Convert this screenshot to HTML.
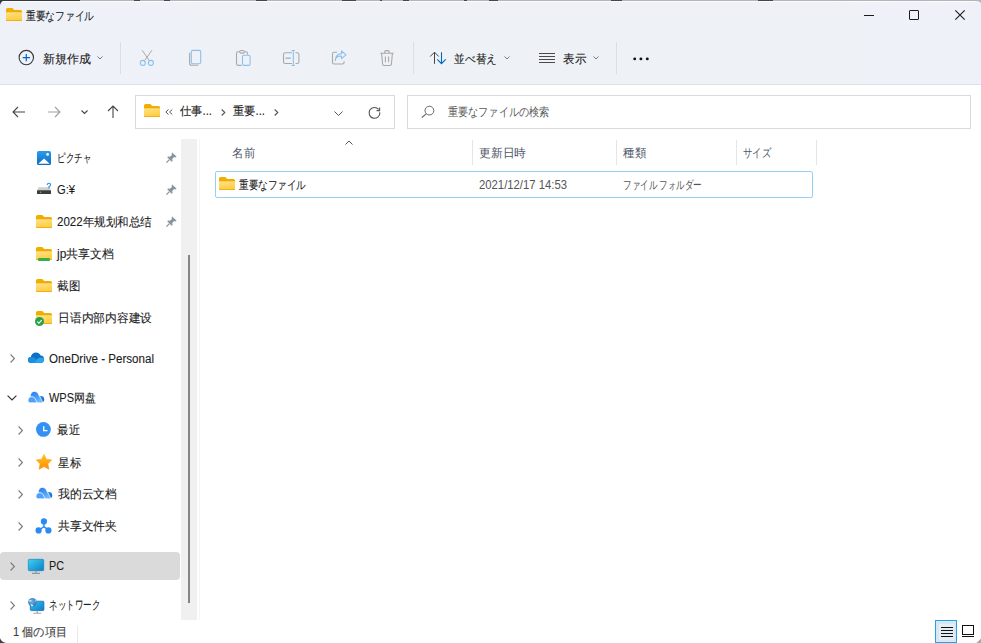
<!DOCTYPE html>
<html><head><meta charset="utf-8">
<style>
*{margin:0;padding:0;box-sizing:border-box}
html,body{width:981px;height:643px;overflow:hidden;background:#fff}
body{font-family:"Liberation Sans",sans-serif;font-size:12px;color:#1b1b1b;position:relative;-webkit-text-stroke:0.1px currentColor}
.a{position:absolute;white-space:nowrap}
svg{position:absolute;overflow:visible}
.t{line-height:14px}
.fit{transform-origin:0 50%}
.box{position:absolute;border:1px solid #dadada;background:#fff}
.sep{position:absolute;width:1px;background:#dcdfe5}
.lt{-webkit-text-stroke:0}
.colsep{position:absolute;top:140px;height:25px;width:1px;background:#e5e5e5}
</style></head><body>
<div class="a" style="left:0px;top:0px;width:981px;height:85px;background:linear-gradient(90deg,#eff1f9 0%,#eef2f7 22%,#eef2f6 60%,#eef2f7 85%,#eff1f9 100%);"></div>
<div class="a" style="left:0px;top:84px;width:981px;height:1px;background:#dde1e6;"></div>
<div class="a" style="left:0px;top:0px;width:981px;height:1px;background:#b4b4b6;"></div>
<div class="a" style="left:0px;top:0px;width:80px;height:1px;background:#373a41;"></div>
<div class="a" style="left:0px;top:1px;width:976px;height:1px;background:#fbfcfe;"></div>
<div class="a" style="left:134px;top:0px;width:6px;height:1px;background:#45474c;"></div>
<div class="a" style="left:164px;top:0px;width:6px;height:1px;background:#45474c;"></div>
<div class="a" style="left:256px;top:0px;width:11px;height:1px;background:#45474c;"></div>
<div class="a" style="left:342px;top:0px;width:14px;height:1px;background:#45474c;"></div>
<div class="a" style="left:380px;top:0px;width:2px;height:1px;background:#45474c;"></div>
<div class="a" style="left:403px;top:0px;width:6px;height:1px;background:#45474c;"></div>
<div class="a" style="left:464px;top:0px;width:3px;height:1px;background:#45474c;"></div>
<div class="a" style="left:489px;top:0px;width:9px;height:1px;background:#45474c;"></div>
<div class="a" style="left:611px;top:0px;width:11px;height:1px;background:#45474c;"></div>
<div class="a" style="left:758px;top:0px;width:15px;height:1px;background:#45474c;"></div>
<svg style="left:0px;top:0px" width="5" height="5" viewBox="0 0 5 5"><path d="M0 0H5Q1 1 0 5Z" fill="#373a41"/></svg>
<svg style="left:973px;top:0px" width="8" height="4" viewBox="0 0 8 4"><path d="M8 0H0Q6 0.5 8 3Z" fill="#b4b4b6"/></svg>
<svg style="left:6px;top:8px" width="16" height="13" viewBox="0 0 16 13"><defs><linearGradient id="fg1" x1="0" y1="0" x2="0.3" y2="1"><stop offset="0" stop-color="#ffe18a"/><stop offset="1" stop-color="#ffce45"/></linearGradient></defs><path d="M0 1.6Q0 0 1.6 0H6.4L8.2 2H14.4Q16 2 16 3.6V11.4Q16 13 14.4 13H1.6Q0 13 0 11.4Z" fill="#efae00"/><path d="M0 3.4H16V11.4Q16 13 14.4 13H1.6Q0 13 0 11.4Z" fill="#e9a800"/><path d="M0 4.2H16V11.2Q16 12.3 14.6 12.3H1.4Q0 12.3 0 11.2Z" fill="url(#fg1)"/></svg>
<div class="a t fit" style="left:26px;top:9px;--w:68;">重要なファイル</div>
<div class="a" style="left:864px;top:15px;width:10px;height:1px;background:#1b1b1b;"></div>
<div class="a" style="left:909px;top:10px;width:10px;height:10px;border:1px solid #1b1b1b;border-radius:1px"></div>
<svg style="left:955px;top:10px" width="10" height="10" viewBox="0 0 10 10"><path d="M0.3 0.3L9.7 9.7M9.7 0.3L0.3 9.7" stroke="#1b1b1b" stroke-width="1.1"/></svg>
<svg style="left:18px;top:50px" width="17" height="16" viewBox="0 0 17 16"><circle cx="8.3" cy="7.6" r="7.2" fill="none" stroke="#3a3a3a" stroke-width="1.1"/><path d="M8.3 3.9V11.3M4.6 7.6H12" stroke="#0067c0" stroke-width="1.2"/></svg>
<div class="a t fit" style="left:43px;top:52px;--w:48;">新規作成</div>
<svg style="left:97px;top:56px" width="6" height="4" viewBox="0 0 6 4"><path d="M0.5 0.5L3 3L5.5 0.5" fill="none" stroke="#7a7a7a" stroke-width="1"/></svg>
<div class="sep" style="left:120px;top:42px;height:32px"></div>
<svg style="left:139px;top:50px" width="16" height="16" viewBox="0 0 16 16"><path d="M3.2 0.3L10.3 10.6M12.9 0.3L5.6 10.6" stroke="#a9a9a9" stroke-width="1" fill="none"/><circle cx="3.8" cy="12.9" r="2.5" fill="none" stroke="#8cc0ec" stroke-width="1.1"/><circle cx="11.9" cy="12.9" r="2.5" fill="none" stroke="#8cc0ec" stroke-width="1.1"/></svg>
<svg style="left:189px;top:50px" width="13" height="16" viewBox="0 0 13 16"><rect x="2.3" y="0.4" width="9.4" height="13.4" rx="1.6" fill="none" stroke="#8cc0ec" stroke-width="1.1"/><path d="M0.6 2.8V13.3Q0.6 15.3 2.6 15.3H9.3" fill="none" stroke="#a9a9a9" stroke-width="1.1"/></svg>
<svg style="left:236px;top:50px" width="15" height="16" viewBox="0 0 15 16"><path d="M4 1.8H2.1Q0.5 1.8 0.5 3.4V13.8Q0.5 15.4 2.1 15.4H5.5M8 1.8H9.9Q11.5 1.8 11.5 3.4V4.5" fill="none" stroke="#a9a9a9" stroke-width="1.1"/><rect x="3.8" y="0.5" width="4.4" height="2.6" rx="1.2" fill="none" stroke="#a9a9a9" stroke-width="1.1"/><rect x="6.5" y="5.2" width="7.6" height="10.2" rx="1.5" fill="none" stroke="#8cc0ec" stroke-width="1.1"/></svg>
<svg style="left:283px;top:50px" width="17" height="16" viewBox="0 0 17 16"><path d="M9 2.8H2.1Q0.5 2.8 0.5 4.4V11.9Q0.5 13.5 2.1 13.5H9M12.5 2.8H14.3Q15.9 2.8 15.9 4.4V11.9Q15.9 13.5 14.3 13.5H12.5" fill="none" stroke="#a9a9a9" stroke-width="1.1"/><path d="M2.5 8.2H7.8" stroke="#8cc0ec" stroke-width="1.5"/><path d="M10.3 0.5V15.5M8.6 0.5H12M8.6 15.5H12" stroke="#8cc0ec" stroke-width="1.1"/></svg>
<svg style="left:332px;top:51px" width="15" height="14" viewBox="0 0 15 14"><path d="M5 1.2H2.1Q0.5 1.2 0.5 2.8V11.4Q0.5 13 2.1 13H10.5Q12.1 13 12.1 11.4V10.3" fill="none" stroke="#a9a9a9" stroke-width="1.1"/><path d="M3.2 9.6Q3.8 5 9.5 5V7.7L14 3.8L9.5 0V2.6Q3.5 3.2 3.2 9.6Z" fill="none" stroke="#8cc0ec" stroke-width="1.1" stroke-linejoin="round"/></svg>
<svg style="left:380px;top:50px" width="14" height="16" viewBox="0 0 14 16"><path d="M0.3 3.2H13.7M4.8 3.2V1.7Q4.8 0.6 5.9 0.6H8.1Q9.2 0.6 9.2 1.7V3.2M1.6 3.2L2.6 14.2Q2.8 15.5 4 15.5H10Q11.2 15.5 11.4 14.2L12.4 3.2M5.4 6.5V12.2M8.6 6.5V12.2" fill="none" stroke="#a9a9a9" stroke-width="1.1"/></svg>
<div class="sep" style="left:413px;top:42px;height:32px"></div>
<svg style="left:429px;top:51px" width="18" height="14" viewBox="0 0 18 14"><path d="M5.5 12.8V1.2M1.2 5.5L5.5 1.2L9.8 5.5" fill="none" stroke="#444" stroke-width="1"/><path d="M12.5 1.2V12.6M8.3 8.4L12.5 12.6L16.7 8.4" fill="none" stroke="#0067c0" stroke-width="1.1"/></svg>
<div class="a t fit" style="left:454px;top:52px;--w:43;">並べ替え</div>
<svg style="left:504px;top:56px" width="6" height="4" viewBox="0 0 6 4"><path d="M0.5 0.5L3 3L5.5 0.5" fill="none" stroke="#7a7a7a" stroke-width="1"/></svg>
<svg style="left:539px;top:53px" width="16" height="10" viewBox="0 0 16 10"><path d="M0 0.5H16M0 3.5H16M0 6.5H16M0 9.5H16" stroke="#4a4a4a" stroke-width="1"/></svg>
<div class="a t fit" style="left:563px;top:52px;--w:23;">表示</div>
<svg style="left:593px;top:56px" width="6" height="4" viewBox="0 0 6 4"><path d="M0.5 0.5L3 3L5.5 0.5" fill="none" stroke="#7a7a7a" stroke-width="1"/></svg>
<div class="sep" style="left:616px;top:42px;height:32px"></div>
<svg style="left:633px;top:57px" width="17" height="4" viewBox="0 0 17 4"><circle cx="1.7" cy="1.9" r="1.45" fill="#111"/><circle cx="7.9" cy="1.9" r="1.45" fill="#111"/><circle cx="14.3" cy="1.9" r="1.45" fill="#111"/></svg>
<svg style="left:12px;top:106px" width="14" height="12" viewBox="0 0 14 12"><path d="M13 6H1M6 1L1 6L6 11" fill="none" stroke="#454545" stroke-width="1.1"/></svg>
<svg style="left:47px;top:106px" width="14" height="12" viewBox="0 0 14 12"><path d="M1 6H13M8 1L13 6L8 11" fill="none" stroke="#a0a0a0" stroke-width="1.1"/></svg>
<svg style="left:81px;top:110px" width="7" height="4" viewBox="0 0 7 4"><path d="M0.5 0.5L3.5 3.5L6.5 0.5" fill="none" stroke="#454545" stroke-width="1.1"/></svg>
<svg style="left:107px;top:105px" width="12" height="14" viewBox="0 0 12 14"><path d="M6 13V1M1 6L6 1L11 6" fill="none" stroke="#454545" stroke-width="1.1"/></svg>
<div class="box" style="left:135px;top:95px;width:260px;height:34px"></div>
<svg style="left:144px;top:104px" width="16" height="13" viewBox="0 0 16 13"><defs><linearGradient id="fg2" x1="0" y1="0" x2="0.3" y2="1"><stop offset="0" stop-color="#ffe18a"/><stop offset="1" stop-color="#ffce45"/></linearGradient></defs><path d="M0 1.6Q0 0 1.6 0H6.4L8.2 2H14.4Q16 2 16 3.6V11.4Q16 13 14.4 13H1.6Q0 13 0 11.4Z" fill="#efae00"/><path d="M0 3.4H16V11.4Q16 13 14.4 13H1.6Q0 13 0 11.4Z" fill="#e9a800"/><path d="M0 4.2H16V11.2Q16 12.3 14.6 12.3H1.4Q0 12.3 0 11.2Z" fill="url(#fg2)"/></svg>
<svg style="left:165px;top:109px" width="8" height="6" viewBox="0 0 8 6"><path d="M3.5 0.5L0.8 3L3.5 5.5M7.3 0.5L4.6 3L7.3 5.5" fill="none" stroke="#555" stroke-width="1"/></svg>
<div class="a t fit" style="left:180px;top:104px;--w:32;">仕事...</div>
<svg style="left:221px;top:109px" width="5" height="7" viewBox="0 0 5 7"><path d="M0.7 0.5L3.8 3.5L0.7 6.5" fill="none" stroke="#555" stroke-width="1.1"/></svg>
<div class="a t fit" style="left:233px;top:104px;--w:32;">重要...</div>
<svg style="left:274px;top:109px" width="5" height="7" viewBox="0 0 5 7"><path d="M0.7 0.5L3.8 3.5L0.7 6.5" fill="none" stroke="#555" stroke-width="1.1"/></svg>
<svg style="left:334px;top:111px" width="9" height="5" viewBox="0 0 9 5"><path d="M0.5 0.5L4.5 4.5L8.5 0.5" fill="none" stroke="#555" stroke-width="1"/></svg>
<svg style="left:368px;top:107px" width="14" height="13" viewBox="0 0 14 13"><path d="M11.8 5.2A5.4 5.4 0 1 1 10.6 2.4" fill="none" stroke="#555" stroke-width="1.1"/><path d="M11.6 0.6V3.6H8.6" fill="none" stroke="#555" stroke-width="1.1"/></svg>
<div class="box" style="left:407px;top:95px;width:564px;height:34px"></div>
<svg style="left:421px;top:105px" width="14" height="13" viewBox="0 0 14 13"><circle cx="8.4" cy="5.6" r="4.4" fill="none" stroke="#666" stroke-width="1"/><path d="M5.2 8.8L0.9 12.5" stroke="#666" stroke-width="1.1"/></svg>
<div class="a t lt fit" style="left:448px;top:105px;color:#5a5a5a;--w:101;">重要なファイルの検索</div>
<div class="a" style="left:0px;top:552px;width:180px;height:28px;background:#dadada;border-radius:4px"></div>
<svg style="left:37px;top:151px" width="14" height="14" viewBox="0 0 14 14"><defs><linearGradient id="pic" x1="0" y1="0" x2="0" y2="1"><stop offset="0" stop-color="#2b9cea"/><stop offset="1" stop-color="#0d6cc2"/></linearGradient></defs><rect x="0" y="0" width="14" height="14" rx="1.6" fill="url(#pic)"/><path d="M1.2 12.8L7.1 7.6L12.7 12.8Z" fill="#fff"/><circle cx="10.6" cy="3.4" r="1.3" fill="#fff"/></svg>
<div class="a t fit" style="left:57px;top:151px;--w:34;">ピクチャ</div>
<svg style="left:166px;top:152px" width="11" height="11" viewBox="0 0 11 11"><path d="M6.2 0.4L10.6 4.8L9.7 5.4L8.3 5L6.2 7.1L6.6 9L5.7 9.8L1.2 5.3L2 4.4L3.9 4.8L6 2.7L5.6 1.3Z" fill="#8b949b"/><path d="M3.4 7.6L0.4 10.6" stroke="#8b949b" stroke-width="1.3"/></svg>
<svg style="left:37px;top:183px" width="14" height="11" viewBox="0 0 14 11"><path d="M1.5 4.2H12.5L14 7.5H0Z" fill="#cfcfcf"/><rect x="0" y="7.3" width="14" height="3.7" rx="0.6" fill="#3b3b3b"/><circle cx="3.6" cy="9.2" r="0.8" fill="#31d158"/><path d="M10.3 2Q10.3 0.3 12 0.3Q13.6 0.3 13.6 1.8Q13.6 3 12 3.6V5.5" fill="none" stroke="#2a8ae0" stroke-width="1.1"/></svg>
<div class="a t fit" style="left:57px;top:183px;--w:18;">G:¥</div>
<svg style="left:166px;top:184px" width="11" height="11" viewBox="0 0 11 11"><path d="M6.2 0.4L10.6 4.8L9.7 5.4L8.3 5L6.2 7.1L6.6 9L5.7 9.8L1.2 5.3L2 4.4L3.9 4.8L6 2.7L5.6 1.3Z" fill="#8b949b"/><path d="M3.4 7.6L0.4 10.6" stroke="#8b949b" stroke-width="1.3"/></svg>
<svg style="left:36px;top:215px" width="16" height="13" viewBox="0 0 16 13"><defs><linearGradient id="fg3" x1="0" y1="0" x2="0.3" y2="1"><stop offset="0" stop-color="#ffe18a"/><stop offset="1" stop-color="#ffce45"/></linearGradient></defs><path d="M0 1.6Q0 0 1.6 0H6.4L8.2 2H14.4Q16 2 16 3.6V11.4Q16 13 14.4 13H1.6Q0 13 0 11.4Z" fill="#efae00"/><path d="M0 3.4H16V11.4Q16 13 14.4 13H1.6Q0 13 0 11.4Z" fill="#e9a800"/><path d="M0 4.2H16V11.2Q16 12.3 14.6 12.3H1.4Q0 12.3 0 11.2Z" fill="url(#fg3)"/></svg>
<div class="a t fit" style="left:57px;top:215px;--w:95;">2022年规划和总结</div>
<svg style="left:166px;top:216px" width="11" height="11" viewBox="0 0 11 11"><path d="M6.2 0.4L10.6 4.8L9.7 5.4L8.3 5L6.2 7.1L6.6 9L5.7 9.8L1.2 5.3L2 4.4L3.9 4.8L6 2.7L5.6 1.3Z" fill="#8b949b"/><path d="M3.4 7.6L0.4 10.6" stroke="#8b949b" stroke-width="1.3"/></svg>
<svg style="left:36px;top:247px" width="16" height="13" viewBox="0 0 16 13"><defs><linearGradient id="fg4" x1="0" y1="0" x2="0.3" y2="1"><stop offset="0" stop-color="#ffe18a"/><stop offset="1" stop-color="#ffce45"/></linearGradient></defs><path d="M0 1.6Q0 0 1.6 0H6.4L8.2 2H14.4Q16 2 16 3.6V11.4Q16 13 14.4 13H1.6Q0 13 0 11.4Z" fill="#efae00"/><path d="M0 3.4H16V11.4Q16 13 14.4 13H1.6Q0 13 0 11.4Z" fill="#e9a800"/><path d="M0 4.2H16V11.2Q16 12.3 14.6 12.3H1.4Q0 12.3 0 11.2Z" fill="url(#fg4)"/></svg>
<div class="a" style="left:38px;top:258px;width:12px;height:3px;background:#2fb14a;border-radius:1px"></div>
<div class="a t fit" style="left:57px;top:247px;--w:57;">jp共享文档</div>
<svg style="left:36px;top:279px" width="16" height="13" viewBox="0 0 16 13"><defs><linearGradient id="fg5" x1="0" y1="0" x2="0.3" y2="1"><stop offset="0" stop-color="#ffe18a"/><stop offset="1" stop-color="#ffce45"/></linearGradient></defs><path d="M0 1.6Q0 0 1.6 0H6.4L8.2 2H14.4Q16 2 16 3.6V11.4Q16 13 14.4 13H1.6Q0 13 0 11.4Z" fill="#efae00"/><path d="M0 3.4H16V11.4Q16 13 14.4 13H1.6Q0 13 0 11.4Z" fill="#e9a800"/><path d="M0 4.2H16V11.2Q16 12.3 14.6 12.3H1.4Q0 12.3 0 11.2Z" fill="url(#fg5)"/></svg>
<div class="a t fit" style="left:57px;top:279px;--w:23;">截图</div>
<svg style="left:36px;top:311px" width="16" height="13" viewBox="0 0 16 13"><defs><linearGradient id="fg6" x1="0" y1="0" x2="0.3" y2="1"><stop offset="0" stop-color="#ffe18a"/><stop offset="1" stop-color="#ffce45"/></linearGradient></defs><path d="M0 1.6Q0 0 1.6 0H6.4L8.2 2H14.4Q16 2 16 3.6V11.4Q16 13 14.4 13H1.6Q0 13 0 11.4Z" fill="#efae00"/><path d="M0 3.4H16V11.4Q16 13 14.4 13H1.6Q0 13 0 11.4Z" fill="#e9a800"/><path d="M0 4.2H16V11.2Q16 12.3 14.6 12.3H1.4Q0 12.3 0 11.2Z" fill="url(#fg6)"/></svg>
<svg style="left:35px;top:317px" width="9" height="9" viewBox="0 0 9 9"><circle cx="4.5" cy="4.5" r="4.5" fill="#2aa14b"/><path d="M2.3 4.6L3.9 6.1L6.7 3.1" fill="none" stroke="#fff" stroke-width="1.1"/></svg>
<div class="a t fit" style="left:58px;top:311px;--w:94;">日语内部内容建设</div>
<svg style="left:10px;top:354px" width="5" height="9" viewBox="0 0 5 9"><path d="M0.6 0.5L4.4 4.5L0.6 8.5" fill="none" stroke="#7a7a7a" stroke-width="1.1"/></svg>
<svg style="left:28px;top:352px" width="16" height="11" viewBox="0 0 16 11"><path d="M3.2 10.8Q0 10.8 0 7.9Q0 5.3 2.8 5Q3.8 0.5 8 0.5Q11.2 0.5 12.6 3.6Q16 3.9 16 7.4Q16 10.8 12.7 10.8Z" fill="#0f6fc6"/><path d="M3.2 10.8Q0 10.8 0 7.9Q0 5.3 2.8 5Q5.8 4.6 8.2 7L12.3 10.8Z" fill="#1d8fe0"/><path d="M16 7.4Q16 10.8 12.7 10.8H6.5L10 6.2Q14.8 4.2 16 7.4Z" fill="#28a8ea"/></svg>
<div class="a t fit" style="left:49px;top:352px;--w:105;">OneDrive - Personal</div>
<svg style="left:7px;top:395px" width="10" height="6" viewBox="0 0 10 6"><path d="M0.6 0.6L5 5L9.4 0.6" fill="none" stroke="#333" stroke-width="1.2"/></svg>
<svg style="left:28px;top:391px" width="17" height="12" viewBox="0 0 17 12"><defs><linearGradient id="wm1" x1="0" y1="0" x2="0.4" y2="1"><stop offset="0" stop-color="#1f75f0"/><stop offset="1" stop-color="#6ab8fb"/></linearGradient><linearGradient id="wr1" x1="0" y1="0" x2="1" y2="1"><stop offset="0" stop-color="#3aa0f6"/><stop offset="1" stop-color="#0a5fd8"/></linearGradient></defs><circle cx="13" cy="8.2" r="3.2" fill="url(#wr1)"/><path d="M2.2 5.5Q2.6 0.4 6.6 0.4Q9.6 0.4 10.6 3.4L14.8 11.4Q14.2 11.8 13 11.8H7.5L4.6 6.2Z" fill="url(#wm1)" stroke="#fff" stroke-width="0.7"/><path d="M1.8 11.8Q0 11.8 0 9.3Q0 5.6 3.8 5.6Q6.1 5.6 7.3 8L9 11.8Z" fill="#4d9ff7" stroke="#fff" stroke-width="0.7"/></svg>
<div class="a t fit" style="left:49px;top:391px;--w:47;">WPS网盘</div>
<svg style="left:18px;top:426px" width="5" height="9" viewBox="0 0 5 9"><path d="M0.6 0.5L4.4 4.5L0.6 8.5" fill="none" stroke="#7a7a7a" stroke-width="1.1"/></svg>
<svg style="left:36px;top:422px" width="15" height="15" viewBox="0 0 15 15"><circle cx="7.4" cy="7.4" r="7.4" fill="#3391f3"/><path d="M7.7 4.3V8.6H11.5" fill="none" stroke="#fff" stroke-width="1.4"/></svg>
<div class="a t fit" style="left:57px;top:423px;--w:23;">最近</div>
<svg style="left:18px;top:458px" width="5" height="9" viewBox="0 0 5 9"><path d="M0.6 0.5L4.4 4.5L0.6 8.5" fill="none" stroke="#7a7a7a" stroke-width="1.1"/></svg>
<svg style="left:36px;top:454px" width="16" height="16" viewBox="0 0 16 16"><defs><linearGradient id="st" x1="0" y1="0" x2="0" y2="1"><stop offset="0" stop-color="#ffc21e"/><stop offset="1" stop-color="#ff8c0a"/></linearGradient></defs><path d="M8 0.3L10.4 5.2L15.8 5.9L11.9 9.7L12.9 15.3L8 12.6L3.1 15.3L4.1 9.7L0.2 5.9L5.6 5.2Z" fill="url(#st)" stroke="url(#st)" stroke-width="0.6" stroke-linejoin="round"/></svg>
<div class="a t fit" style="left:58px;top:456px;--w:23;">星标</div>
<svg style="left:18px;top:490px" width="5" height="9" viewBox="0 0 5 9"><path d="M0.6 0.5L4.4 4.5L0.6 8.5" fill="none" stroke="#7a7a7a" stroke-width="1.1"/></svg>
<svg style="left:36px;top:487px" width="17" height="12" viewBox="0 0 17 12"><defs><linearGradient id="wm2" x1="0" y1="0" x2="0.4" y2="1"><stop offset="0" stop-color="#1f75f0"/><stop offset="1" stop-color="#6ab8fb"/></linearGradient><linearGradient id="wr2" x1="0" y1="0" x2="1" y2="1"><stop offset="0" stop-color="#3aa0f6"/><stop offset="1" stop-color="#0a5fd8"/></linearGradient></defs><circle cx="13" cy="8.2" r="3.2" fill="url(#wr2)"/><path d="M2.2 5.5Q2.6 0.4 6.6 0.4Q9.6 0.4 10.6 3.4L14.8 11.4Q14.2 11.8 13 11.8H7.5L4.6 6.2Z" fill="url(#wm2)" stroke="#fff" stroke-width="0.7"/><path d="M1.8 11.8Q0 11.8 0 9.3Q0 5.6 3.8 5.6Q6.1 5.6 7.3 8L9 11.8Z" fill="#4d9ff7" stroke="#fff" stroke-width="0.7"/></svg>
<div class="a t fit" style="left:58px;top:487px;--w:59;">我的云文档</div>
<svg style="left:18px;top:522px" width="5" height="9" viewBox="0 0 5 9"><path d="M0.6 0.5L4.4 4.5L0.6 8.5" fill="none" stroke="#7a7a7a" stroke-width="1.1"/></svg>
<svg style="left:35px;top:518px" width="17" height="16" viewBox="0 0 17 16"><path d="M8.9 3.5V8.6M8.9 8.6L3.8 12.2M8.9 8.6L13.6 12.2" stroke="#2b8af3" stroke-width="1.4" fill="none"/><circle cx="8.9" cy="3.4" r="3.1" fill="#2b8af3"/><circle cx="3.6" cy="12.4" r="3.1" fill="#2b8af3"/><circle cx="13.4" cy="12.4" r="3.1" fill="#2b8af3"/></svg>
<div class="a t fit" style="left:58px;top:519px;--w:59;">共享文件夹</div>
<svg style="left:10px;top:562px" width="5" height="9" viewBox="0 0 5 9"><path d="M0.6 0.5L4.4 4.5L0.6 8.5" fill="none" stroke="#7a7a7a" stroke-width="1.1"/></svg>
<svg style="left:28px;top:559px" width="16" height="15" viewBox="0 0 16 15"><defs><linearGradient id="pc" x1="0" y1="0" x2="1" y2="1"><stop offset="0" stop-color="#3fd0f0"/><stop offset="1" stop-color="#0b7fc8"/></linearGradient></defs><rect x="0.3" y="0.3" width="15.4" height="11.4" rx="1" fill="url(#pc)" stroke="#0d78be" stroke-width="0.6"/><path d="M8 11.8V13.8M4 14.3H12" stroke="#8a98a3" stroke-width="1.2"/></svg>
<div class="a t fit" style="left:49px;top:559px;--w:15;">PC</div>
<svg style="left:10px;top:601px" width="5" height="9" viewBox="0 0 5 9"><path d="M0.6 0.5L4.4 4.5L0.6 8.5" fill="none" stroke="#7a7a7a" stroke-width="1.1"/></svg>
<svg style="left:28px;top:597px" width="17" height="17" viewBox="0 0 17 17"><defs><linearGradient id="nw" x1="0" y1="0" x2="1" y2="1"><stop offset="0" stop-color="#35c6ee"/><stop offset="1" stop-color="#0c7ccc"/></linearGradient><radialGradient id="gl" cx="0.4" cy="0.4" r="0.7"><stop offset="0" stop-color="#6fb5e6"/><stop offset="1" stop-color="#2a6fae"/></radialGradient></defs><rect x="2.3" y="4.2" width="13.6" height="9.4" rx="1" fill="url(#nw)" stroke="#0c5fa6" stroke-width="0.7"/><path d="M9.2 13.8V16M5.3 16.3H13.2" stroke="#9aa3ab" stroke-width="1.1"/><circle cx="4.4" cy="5.3" r="4.3" fill="url(#gl)"/><path d="M1.4 3.2Q2.8 2.6 3.8 3.6Q3 4.8 1.2 4.6Z M2.3 7.4Q3.8 6.8 5.4 8.4Q5 9.3 3.6 9.3Z M7.2 2.8Q8.4 3.6 8.3 5.4Q7.4 5 7.2 2.8Z" fill="#d9f0ff"/></svg>
<div class="a t fit" style="left:49px;top:598px;--w:51;">ネットワーク</div>
<div class="a" style="left:181px;top:139px;width:16px;height:481px;background:#f0f0f0;"></div>
<div class="a" style="left:188px;top:255px;width:2px;height:348px;background:#858585;"></div>
<div class="a" style="left:199px;top:139px;width:1px;height:481px;background:#f6f6f6;"></div>
<svg style="left:345px;top:140px" width="8" height="5" viewBox="0 0 8 5"><path d="M0.5 4.5L4 1L7.5 4.5" fill="none" stroke="#555" stroke-width="1"/></svg>
<div class="a t lt fit" style="left:232px;top:146px;color:#4e5566;--w:23;">名前</div>
<div class="colsep" style="left:472px"></div>
<div class="a t lt fit" style="left:479px;top:146px;color:#4e5566;--w:47;">更新日時</div>
<div class="colsep" style="left:616px"></div>
<div class="a t lt fit" style="left:623px;top:146px;color:#4e5566;--w:23;">種類</div>
<div class="colsep" style="left:736px"></div>
<div class="a t lt fit" style="left:743px;top:146px;color:#4e5566;--w:28;">サイズ</div>
<div class="colsep" style="left:816px"></div>
<div class="a" style="left:215px;top:171px;width:598px;height:27px;border:1px solid #99cef5;border-radius:2px"></div>
<svg style="left:219px;top:177px" width="16" height="13" viewBox="0 0 16 13"><defs><linearGradient id="fg7" x1="0" y1="0" x2="0.3" y2="1"><stop offset="0" stop-color="#ffe18a"/><stop offset="1" stop-color="#ffce45"/></linearGradient></defs><path d="M0 1.6Q0 0 1.6 0H6.4L8.2 2H14.4Q16 2 16 3.6V11.4Q16 13 14.4 13H1.6Q0 13 0 11.4Z" fill="#efae00"/><path d="M0 3.4H16V11.4Q16 13 14.4 13H1.6Q0 13 0 11.4Z" fill="#e9a800"/><path d="M0 4.2H16V11.2Q16 12.3 14.6 12.3H1.4Q0 12.3 0 11.2Z" fill="url(#fg7)"/></svg>
<div class="a t fit" style="left:239px;top:178px;--w:67;">重要なファイル</div>
<div class="a t lt fit" style="left:479px;top:178px;color:#555;--w:88;">2021/12/17 14:53</div>
<div class="a t lt fit" style="left:623px;top:178px;color:#555;--w:79;">ファイル フォルダー</div>
<div class="a t fit" style="left:13px;top:625px;color:#3a3a3a;--w:54;">1 個の項目</div>
<div class="a" style="left:77px;top:626px;width:1px;height:17px;background:#e8e8e8;"></div>
<svg style="left:0px;top:638px" width="6" height="5" viewBox="0 0 6 5"><path d="M0 0Q1 4 6 5H0Z" fill="#3a3d44"/></svg>
<div class="a" style="left:935px;top:620px;width:22px;height:23px;border:1px solid #28a0e2;background:#d5e8f6"></div>
<div class="a" style="left:939px;top:624px;width:15px;height:16px;background:#e7eef3;"></div>
<svg style="left:975px;top:637px" width="6" height="6" viewBox="0 0 6 6"><path d="M6 1.5V6H1.5Z" fill="#a8a8aa"/></svg>
<svg style="left:941px;top:627px" width="12" height="10" viewBox="0 0 12 10"><path d="M0 0.5H12M0 3.5H12M0 6.5H12M0 9.5H12" stroke="#111" stroke-width="1"/></svg>
<svg style="left:962px;top:625px" width="12" height="12" viewBox="0 0 12 12"><rect x="0.5" y="0.5" width="11" height="9" fill="#fff" stroke="#111" stroke-width="1"/><path d="M0 11.5H12" stroke="#111" stroke-width="1"/></svg>
<script>
(function(){
  var els=document.querySelectorAll('.fit');
  for(var i=0;i<els.length;i++){
    var e=els[i];
    var w=parseFloat(getComputedStyle(e).getPropertyValue('--w'));
    var r=e.getBoundingClientRect().width;
    if(w>0&&r>0){e.style.transform='scaleX('+(w/r)+')';}
  }
})();
</script>
</body></html>
